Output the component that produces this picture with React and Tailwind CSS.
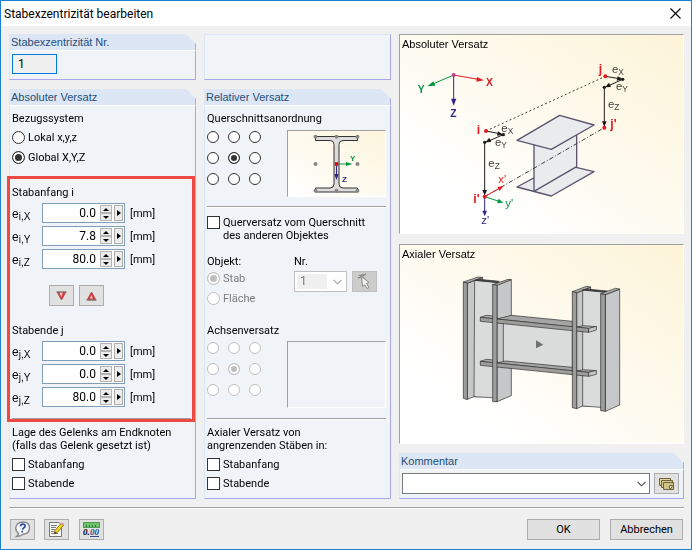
import { useState } from "react";
import clsx from "clsx";

const bodyFont = "font-[Roboto,'Noto_Sans',sans-serif]";
const headFont = "font-['Liberation_Sans',sans-serif]";
const toolButton =
  "flex h-[21px] w-[25px] shrink-0 items-center justify-center border border-[#adadad] bg-[#e1e1e1]";

/* ============================
        PANELS
============================ */
function Panel({ title, className, children }) {
  return (
    <section className={clsx("flex flex-col", className)}>
      <h2
        className={clsx(
          headFont,
          "h-4 border-r border-[#a8a8ec] bg-[#dce6f4] pl-0.5 text-[11px] leading-4 text-[#1f4e79] [clip-path:polygon(0_0,calc(100%-10px)_0,100%_10px,100%_100%,0_100%)]"
        )}
      >
        {title}
      </h2>
      <div className="flex-1 border border-t-white border-r-[#a8a8ec] border-b-[#a8a8ec] border-l-[#dce6f4] bg-[#f0f4f9] pr-1 pl-0.5">
        {children}
      </div>
    </section>
  );
}

function Divider({ className }) {
  return <hr className={clsx("h-0.5 border-t border-b border-t-[#a0a0a0] border-b-white", className)} />;
}

function Figure({ title, viewBox, className, children }) {
  return (
    <figure
      className={clsx(
        "relative border border-t-[#a0a0a0] border-r-white border-b-white border-l-[#a0a0a0] bg-linear-to-tr from-white from-20% to-[#fdf4d8]",
        className
      )}
    >
      <figcaption className={clsx(headFont, "absolute top-0.5 left-0.5 text-[11px] leading-3.5")}>{title}</figcaption>
      <svg viewBox={viewBox} className="block h-auto w-full">
        {children}
      </svg>
    </figure>
  );
}

/* ============================
        CONTROLS
============================ */
function Radio({ small, ...props }) {
  return (
    <input
      type="radio"
      className={clsx(
        "shrink-0 appearance-none rounded-full border border-[#333333] bg-white shadow-[inset_0_0_0_2px_white] checked:bg-[#333333] disabled:border-[#bfbfbf] disabled:checked:bg-[#bfbfbf]",
        small ? "size-3" : "size-[13px]"
      )}
      {...props}
    />
  );
}

function Check({ label, lines }) {
  return (
    <label className={clsx("flex gap-[3px]", lines ? "items-start" : "items-center")}>
      <input
        type="checkbox"
        className="size-[13px] shrink-0 appearance-none border border-[#333333] bg-white checked:bg-[#333333] checked:shadow-[inset_0_0_0_2px_white]"
      />
      <span>{label}</span>
    </label>
  );
}

function RadioGrid({ name, disabled }) {
  const [pos, setPos] = useState(4);
  return (
    <div className="grid grid-cols-3 gap-[9px] pt-px">
      {[0, 1, 2, 3, 4, 5, 6, 7, 8].map((n) => (
        <Radio
          key={n}
          small
          name={name}
          aria-label={`Position ${n + 1}`}
          disabled={disabled}
          checked={pos === n}
          onChange={() => setPos(n)}
        />
      ))}
    </div>
  );
}

function Spin({ node, axis, value }) {
  const [val, setVal] = useState(value);
  const id = `e-${node}-${axis}`;
  const step = (d) => setVal((v) => (Number(v) + d).toFixed(1));

  return (
    <div className="flex h-5 items-center">
      <label htmlFor={id} className={clsx(headFont, "w-[30px] pt-0.5 text-[12px] leading-3.5")}>
        e<span className="relative top-0.5 text-[10px]">{node},{axis}</span>
      </label>
      <div className="flex h-5 w-[83px] items-center border border-[#7f9db9] bg-white pr-px">
        <input
          id={id}
          value={val}
          onChange={(e) => setVal(e.target.value)}
          className="min-w-0 flex-1 pr-1 text-right text-[12px] outline-none"
        />
        <div className="flex h-4 w-3 flex-col">
          <button
            aria-label="Erhöhen"
            onClick={() => step(0.1)}
            className="flex flex-1 items-center justify-center border border-[#b4b4b4] bg-[#ececec]"
          >
            <svg width="6" height="3" viewBox="0 0 6 3">
              <path d="M0 3L3 0L6 3Z" />
            </svg>
          </button>
          <button
            aria-label="Verringern"
            onClick={() => step(-0.1)}
            className="flex flex-1 items-center justify-center border border-[#b4b4b4] bg-[#ececec]"
          >
            <svg width="6" height="3" viewBox="0 0 6 3">
              <path d="M0 0L3 3L6 0Z" />
            </svg>
          </button>
        </div>
        <button
          aria-label="Auswahl"
          className="ml-0.5 flex h-4 w-[9px] items-center justify-center border border-[#adadad] bg-[#ececec]"
        >
          <svg width="4" height="6" viewBox="0 0 4 6">
            <path d="M0 0L4 3L0 6Z" />
          </svg>
        </button>
      </div>
      <span className="pl-[5px]">[mm]</span>
    </div>
  );
}

function Chevron({ className }) {
  return (
    <svg width="9" height="6" viewBox="0 0 9 6" fill="none" className={clsx("pointer-events-none", className)}>
      <path d="M0.5 0.8L4.5 4.8L8.5 0.8" stroke="currentColor" strokeWidth="1.1" />
    </svg>
  );
}

/* ============================
        DRAWINGS
============================ */
function SectionDrawing() {
  return (
    <svg viewBox="0 0 97 65" className="block h-full w-full">
      <path
        d="M27.5 5.5H69.5V9.5H55Q51 9.5 51 13.5V53Q51 57 55 57H69.5V61H27.5V57H42Q46 57 46 53V13.5Q46 9.5 42 9.5H27.5Z"
        fill="#dcdcdc"
        stroke="#333"
        strokeWidth="1"
      />
      <path d="M48.5 33H59" stroke="#009640" />
      <path d="M58 31L64.5 33L58 35Z" fill="#009640" />
      <path d="M48.5 33V44" stroke="#312783" />
      <path d="M46.3 43H50.7L48.5 49Z" fill="#312783" />
      {[5.7, 33, 59.7].map((y) =>
        [27.5, 48.5, 69.5].map((x) => <circle key={`${x}-${y}`} cx={x} cy={y} r="2" fill="#878787" />)
      )}
      <rect x="46.8" y="31.3" width="3.4" height="3.4" fill="#e30613" />
      <g fontFamily="Liberation Sans, sans-serif" fontWeight="700" fontSize="8">
        <text x="62" y="29.5" fill="#009640">Y</text>
        <text x="54" y="51" fill="#312783">Z</text>
      </g>
    </svg>
  );
}

function Label({ x, y, sub, children, ...rest }) {
  return (
    <text x={x} y={y} {...rest}>
      {children}
      {sub && <tspan dy="5" fontSize="25">{sub}</tspan>}
    </text>
  );
}

function OffsetDrawing() {
  return (
    <g fontFamily="Liberation Sans, sans-serif" fontSize="34" strokeWidth="3">
      {/* global axes */}
      <path d="M167 225L100 254" stroke="#009640" />
      <path d="M88 259L106 244L112 257Z" fill="#009640" />
      <path d="M167 225L240 238" stroke="#e31b23" />
      <path d="M258 241L235 245L237 231Z" fill="#e31b23" />
      <path d="M167 225V300" stroke="#312783" />
      <path d="M159 296H175L167 317Z" fill="#312783" />
      <circle cx="167" cy="225" r="6" fill="#b5468b" />
      <g fontWeight="700" fontSize="31">
        <text x="59" y="278" fill="#009640">Y</text>
        <text x="264" y="258" fill="#e31b23">X</text>
        <text x="157" y="351" fill="#312783">Z</text>
      </g>

      {/* beam */}
      <g fill="#e9ebed" stroke="#5a5470" strokeWidth="4" strokeLinejoin="round">
        <path d="M357 561L487 491L588 515L460 588Z" />
        <path d="M408 430V574L536 500V400Z" />
        <path d="M357 421L485 346L588 375L460 448Z" />
      </g>

      <g stroke="#3c3c3b" fill="none">
        <path d="M264 393L622 229" strokeDasharray="6 7" />
        <path d="M260 590L619 383" strokeDasharray="13 6 3 6" />
      </g>

      {/* offsets at i and j */}
      <g stroke="#1d1d1b">
        <path d="M264 393L305 401M316 404L272 423M260 427V575" />
        <path d="M622 229L664 236M674 238L630 258M619 262V370" />
      </g>
      <g fill="#1d1d1b">
        <path d="M316 404L297 407L300 394ZM262 427L274 413L280 426ZM253 570H267L260 587Z" />
        <path d="M676 238L656 242L659 229ZM621 262L633 248L639 261ZM612 364H626L619 381Z" />
        <circle cx="316" cy="404" r="5" />
        <circle cx="674" cy="238" r="5" />
        <circle cx="260" cy="427" r="5" />
        <circle cx="619" cy="262" r="5" />
      </g>
      <g fill="#3c3c3b">
        <Label x="310" y="396" sub="X">e</Label>
        <Label x="291" y="438" sub="Y">e</Label>
        <Label x="271" y="501" sub="Z">e</Label>
        <Label x="642" y="219" sub="X">e</Label>
        <Label x="654" y="271" sub="Y">e</Label>
        <Label x="630" y="324" sub="Z">e</Label>
      </g>

      {/* local axes at i' */}
      <path d="M260 590L303 566" stroke="#e31b23" />
      <path d="M316 558L305 573L298 561Z" fill="#e31b23" />
      <path d="M260 590L300 603" stroke="#009640" />
      <path d="M316 608L297 610L302 596Z" fill="#009640" />
      <path d="M260 590V635" stroke="#312783" />
      <path d="M253 632H267L260 649Z" fill="#312783" />
      <text x="301" y="549" fill="#e31b23">x'</text>
      <text x="322" y="621" fill="#009640">y'</text>
      <text x="250" y="671" fill="#312783">z'</text>

      <g fill="#e31b23">
        <circle cx="264" cy="393" r="6" />
        <circle cx="622" cy="229" r="6" />
        <circle cx="260" cy="590" r="6" />
        <circle cx="619" cy="383" r="6" />
        <g fontWeight="700" fontSize="37">
          <text x="236" y="402">i</text>
          <text x="602" y="218">j</text>
          <text x="226" y="609">i'</text>
          <text x="637" y="385">j'</text>
        </g>
      </g>
    </g>
  );
}

function AxialDrawing() {
  return (
    <g stroke="#2b2b2a" strokeWidth="2" strokeLinejoin="round">
      {/* left column */}
      <path d="M208 130L254 113V470H228L208 478Z" fill="#c6c7c8" />
      <path d="M196 126L240 111L254 112L208 129Z" fill="#b1b1b1" />
      <path d="M230 121L298 126V474L228 470Z" fill="#dadbdb" />
      <path d="M230 121L244 118L304 124L298 128Z" fill="#4a4a49" />
      <path d="M196 126L208 129V479L196 475Z" fill="#9d9d9c" />
      <path d="M297 135L340 119V467L297 485Z" fill="#c6c7c8" />

      {/* beam */}
      <path d="M316 247L523 262V386L316 370Z" fill="#dadbdb" />
      <path d="M297 237L340 226L523 244V261Z" fill="#a5a5a5" />
      <path d="M297 369L322 363L523 382V393Z" fill="#a5a5a5" />

      {/* right column */}
      <path d="M536 159L578 142V498H554L536 506Z" fill="#c6c7c8" />
      <path d="M523 155L565 139L578 141L536 158Z" fill="#b1b1b1" />
      <path d="M554 150L622 156V503L554 498Z" fill="#dadbdb" />
      <path d="M554 150L568 147L628 153L622 157Z" fill="#4a4a49" />

      {/* beam flanges */}
      <path d="M247 232L265 226L297 229V237Z" fill="#b1b1b1" />
      <path d="M536 261L556 257L595 260L572 266Z" fill="#b1b1b1" />
      <path d="M247 232L572 265V277L247 244Z" fill="#9d9d9c" />
      <path d="M572 265L595 259V270L572 277Z" fill="#c6c7c8" />
      <path d="M247 364L265 358L297 361V369Z" fill="#b1b1b1" />
      <path d="M536 393L556 389L595 392L572 397Z" fill="#b1b1b1" />
      <path d="M247 364L572 397V409L247 376Z" fill="#9d9d9c" />
      <path d="M572 397L595 391V403L572 409Z" fill="#c6c7c8" />

      {/* front edges of the columns */}
      <path d="M284 134L330 118L340 119L297 136Z" fill="#b1b1b1" />
      <path d="M284 133L297 136V485L284 485Z" fill="#9d9d9c" />
      <path d="M523 155L536 158V506L523 503Z" fill="#9d9d9c" />
      <path d="M622 164L665 148V495L622 514Z" fill="#c6c7c8" />
      <path d="M608 161L652 145L665 147L622 164Z" fill="#b1b1b1" />
      <path d="M608 161L622 164V514L608 512Z" fill="#9d9d9c" />

      <path d="M414 301L436 314L414 325Z" fill="#6f6f6e" stroke="none" />
    </g>
  );
}

/* ============================
        ICONS
============================ */
function Triangle({ down }) {
  return (
    <svg width="11" height="10" viewBox="0 0 11 10">
      {down ? (
        <>
          <path d="M1 1H10L5.5 9Z" fill="#e0343a" stroke="#9c5050" strokeWidth="0.8" />
          <path d="M3.6 1.6H6.6L5.3 6Z" fill="#ffe3e3" />
          <path d="M0.5 1H10.5" stroke="#777" />
        </>
      ) : (
        <>
          <path d="M1 9H10L5.5 1Z" fill="#e0343a" stroke="#9c5050" strokeWidth="0.8" />
          <path d="M4 7.5H6.8L5.4 4Z" fill="#ffe3e3" />
          <path d="M0.5 9H10.5" stroke="#777" />
        </>
      )}
    </svg>
  );
}

function PickIcon() {
  return (
    <svg width="17" height="17" viewBox="0 0 17 17">
      <path d="M2 5L10 1M3 2L9 6M6 1V6" stroke="#8c8c86" strokeWidth="1.5" />
      <path d="M5.5 3.5L13 9.5L10.5 10.5L13 14.5L11 15.5L8.8 11.8L6.5 13.5Z" fill="#f0f0ec" stroke="#8c8c86" strokeWidth="1" />
    </svg>
  );
}

function CardsIcon() {
  return (
    <svg width="17" height="14" viewBox="0 0 17 14" stroke="#6e6238" strokeWidth="1">
      <path d="M1.5 1.5H12.5V8.5H1.5Z" fill="#e0d6a4" />
      <path d="M3.5 3.5H14.5V10.5H3.5Z" fill="#d8cc94" />
      <path d="M5.5 5.5H15.5V12.5H5.5Z" fill="#cfc288" />
      <path d="M11.5 8.5H14.5L13 11.5H11.5Z" fill="#fff8d8" />
    </svg>
  );
}

function HelpIcon() {
  return (
    <svg width="17" height="17" viewBox="0 0 17 17">
      <path
        d="M9 1C13.2 1 15.5 3.6 15.5 7C15.5 10.6 13 13 9 13.2C7.5 14.7 5.5 15.4 2.5 15.5C4 14.3 4.6 13.3 4.6 12.3C2.6 11 1.7 9.3 1.7 7C1.7 3.6 4.6 1 9 1Z"
        fill="#f4f5f7"
        stroke="#85888c"
        strokeWidth="1.4"
      />
      <path
        d="M6.6 5.3C6.8 3.7 7.8 3.2 9 3.2C10.6 3.2 11.4 4 11.1 5.2C10.8 6.6 9 6.8 8.6 8.6M8.2 9.8V11.4"
        fill="none"
        stroke="#2c4a9a"
        strokeWidth="1.7"
      />
    </svg>
  );
}

function NoteIcon() {
  return (
    <svg width="17" height="17" viewBox="0 0 17 17">
      <path d="M1.5 1.5H11L13.5 4V15.5H1.5Z" fill="#f7f7f7" stroke="#777" />
      <path d="M3 4.5H9M3 6.5H8M3 8.5H7M3 10.5H6M3 12.5H10" stroke="#7d7d7d" />
      <path d="M6.5 12.5L7 9.5L13 2.5L15.5 4.5L9.3 11.4Z" fill="#f5d51a" stroke="#6c5a10" strokeWidth="0.8" />
      <path d="M13 2.5L14.2 1.2L16.6 3.2L15.5 4.5Z" fill="#e79ab9" />
      <path d="M6.4 12.7L6.8 10.8L8.2 11.9Z" fill="#111" />
    </svg>
  );
}

function UnitsIcon() {
  return (
    <svg width="17" height="16" viewBox="0 0 17 16">
      <rect x="0.5" y="0.5" width="16" height="5" fill="#6cc36b" stroke="#4f9a50" />
      <path d="M3.5 5V3M6.5 5V3M9.5 5V3M12.5 5V3" stroke="#2f7a35" />
      <path d="M7 14.5H16" stroke="#2c4a9a" />
      <g fontFamily="Liberation Serif, serif" fontStyle="italic" fontWeight="700" fontSize="9">
        <text x="0" y="13">0.</text>
        <text x="7" y="13" fill="#2c4a9a">00</text>
      </g>
    </svg>
  );
}

/* ============================
        DIALOG
============================ */
export default function App() {
  const [nr, setNr] = useState("1");
  const [system, setSystem] = useState("global");

  return (
    <div className={clsx(bodyFont, "border border-[#1a80d2] bg-[#f0f0f0] text-[11px] leading-[13px] text-black")}>
      <header className="flex h-[25px] items-center justify-between bg-white pr-2.5 pl-[3px]">
        <h1 className="text-[12px] leading-4">Stabexzentrizität bearbeiten</h1>
        <button aria-label="Schließen">
          <svg width="11" height="11" viewBox="0 0 11 11">
            <path d="M0.5 0.5L10.5 10.5M10.5 0.5L0.5 10.5" stroke="#000" strokeWidth="1.1" />
          </svg>
        </button>
      </header>

      <main className="grid grid-cols-[187fr_187fr_285fr] gap-2 pt-2 pr-[7px] pl-2">
        {/* ABSOLUTE OFFSET */}
        <div className="flex flex-col gap-[9px]">
          <Panel title="Stabexzentrizität Nr." className="h-[46px]">
            <input
              aria-label="Stabexzentrizität Nr."
              value={nr}
              onChange={(e) => setNr(e.target.value)}
              className="mt-[3px] block h-5 w-[45px] border border-[#0078d7] bg-[#f0f0f0] pl-[5px] text-[12px] outline-none"
              autoFocus
            />
          </Panel>

          <Panel title="Absoluter Versatz" className="flex-1">
            <p className="pt-1.5">Bezugssystem</p>
            <div className="mt-[3px] flex flex-col gap-px">
              <label className="flex h-[19px] items-center gap-[3px]">
                <Radio name="system" checked={system === "lokal"} onChange={() => setSystem("lokal")} />
                Lokal x,y,z
              </label>
              <label className="flex h-[19px] items-center gap-[3px]">
                <Radio name="system" checked={system === "global"} onChange={() => setSystem("global")} />
                Global X,Y,Z
              </label>
            </div>

            <div className="relative mt-[19px]">
              <div className="pointer-events-none absolute -top-[10px] -right-1 -bottom-0.5 -left-[5px] border-3 border-[#ee4a44]" />
              <h3>Stabanfang i</h3>
              <div className="mt-1 flex flex-col gap-[3px]">
                <Spin node="i" axis="X" value="0.0" />
                <Spin node="i" axis="Y" value="7.8" />
                <Spin node="i" axis="Z" value="80.0" />
              </div>
              <div className="mt-4 flex gap-[5px] pl-[37px]">
                <button aria-label="Nach Stabende kopieren" className={toolButton}>
                  <Triangle down />
                </button>
                <button aria-label="Nach Stabanfang kopieren" className={toolButton}>
                  <Triangle />
                </button>
              </div>
              <h3 className="mt-[18px]">Stabende j</h3>
              <div className="mt-1 flex flex-col gap-[3px]">
                <Spin node="j" axis="X" value="0.0" />
                <Spin node="j" axis="Y" value="0.0" />
                <Spin node="j" axis="Z" value="80.0" />
              </div>
              <Divider className="mt-[11px]" />
            </div>

            <p className="mt-1.5 whitespace-nowrap">
              Lage des Gelenks am Endknoten
              <br />
              (falls das Gelenk gesetzt ist)
            </p>
            <div className="mt-1.5 flex flex-col gap-1.5 pb-2">
              <Check label="Stabanfang" />
              <Check label="Stabende" />
            </div>
          </Panel>
        </div>

        {/* RELATIVE OFFSET */}
        <div className="flex flex-col gap-[9px]">
          <div className="h-[46px] border border-t-[#dce6f4] border-r-[#a8a8ec] border-b-[#a8a8ec] border-l-[#dce6f4] bg-[#f0f4f9]" />

          <Panel title="Relativer Versatz" className="flex-1">
            <p className="pt-1.5">Querschnittsanordnung</p>
            <div className="mt-[5px] flex items-start justify-between">
              <RadioGrid name="section" />
              <div className="h-[67px] w-[99px] border border-t-[#a0a0a0] border-r-white border-b-white border-l-[#a0a0a0] bg-linear-to-tr from-white to-[#fdf5dc]">
                <SectionDrawing />
              </div>
            </div>
            <Divider className="mt-[9px] mb-2" />

            <Check
              lines
              label={
                <>
                  Querversatz vom Querschnitt
                  <br />
                  des anderen Objektes
                </>
              }
            />

            <div className="mt-[13px] grid grid-cols-[87px_1fr]">
              <span>Objekt:</span>
              <label htmlFor="objekt-nr">Nr.</label>
              <div className="flex flex-col gap-[7px] pt-1 text-[#7a7a7a]">
                <label className="flex items-center gap-[3px]">
                  <Radio name="objekt" disabled defaultChecked />
                  Stab
                </label>
                <label className="flex items-center gap-[3px]">
                  <Radio name="objekt" disabled />
                  Fläche
                </label>
              </div>
              <div className="flex gap-[5px] pt-[3px]">
                <div className="flex h-[21px] w-[53px] items-center border border-[#bfbfbf] bg-white pr-1 pl-0.5">
                  <select
                    id="objekt-nr"
                    disabled
                    className="h-[15px] w-[30px] appearance-none bg-[#f0f0f0] pl-[3px] text-[12px] leading-[15px] text-[#7a7a7a] opacity-100"
                  >
                    <option>1</option>
                  </select>
                  <Chevron className="ml-auto text-[#a0a0a0]" />
                </div>
                <button
                  disabled
                  aria-label="Objekt wählen"
                  className="flex h-[21px] w-[25px] items-center justify-center border border-[#bfbfbf] bg-[#cccccc]"
                >
                  <PickIcon />
                </button>
              </div>
            </div>

            <p className="mt-[19px]">Achsenversatz</p>
            <div className="mt-1 flex items-start justify-between">
              <RadioGrid name="axis" disabled />
              <div className="h-[67px] w-[99px] border border-t-[#a0a0a0] border-r-white border-b-white border-l-[#a0a0a0]" />
            </div>
            <Divider className="mt-2.5" />

            <p className="mt-1.5">
              Axialer Versatz von
              <br />
              angrenzenden Stäben in:
            </p>
            <div className="mt-1.5 flex flex-col gap-1.5 pb-2">
              <Check label="Stabanfang" />
              <Check label="Stabende" />
            </div>
          </Panel>
        </div>

        {/* PICTURES AND COMMENT */}
        <div className="flex flex-col">
          <Figure title="Absoluter Versatz" viewBox="6 105 849 594" className="mb-2.5">
            <OffsetDrawing />
          </Figure>
          <Figure title="Axialer Versatz" viewBox="6 15 849 594" className="mb-[9px]">
            <AxialDrawing />
          </Figure>
          <Panel title="Kommentar">
            <div className="flex gap-1 pt-[3px] pb-1">
              <div className="relative flex-1">
                <select
                  aria-label="Kommentar"
                  className="block h-[21px] w-full appearance-none border border-[#7a7a7a] bg-white px-1"
                >
                  <option></option>
                </select>
                <Chevron className="absolute top-2 right-1 text-[#444444]" />
              </div>
              <button aria-label="Kommentar übernehmen" className={toolButton}>
                <CardsIcon />
              </button>
            </div>
          </Panel>
        </div>
      </main>

      <footer className="pt-2 pr-[7px] pb-[9px] pl-2">
        <Divider />
        <div className="mt-2.5 flex items-center pl-px">
          <button aria-label="Hilfe" className={clsx(toolButton, "mr-[9px]")}>
            <HelpIcon />
          </button>
          <button aria-label="Notiz" className={clsx(toolButton, "mr-2.5")}>
            <NoteIcon />
          </button>
          <button aria-label="Einheiten" className={toolButton}>
            <UnitsIcon />
          </button>
          <button className="mr-2.5 ml-auto h-[21px] w-[73px] border border-[#adadad] bg-[#e1e1e1]">OK</button>
          <button className="mr-px h-[21px] w-[73px] border border-[#adadad] bg-[#e1e1e1]">Abbrechen</button>
        </div>
      </footer>
    </div>
  );
}
